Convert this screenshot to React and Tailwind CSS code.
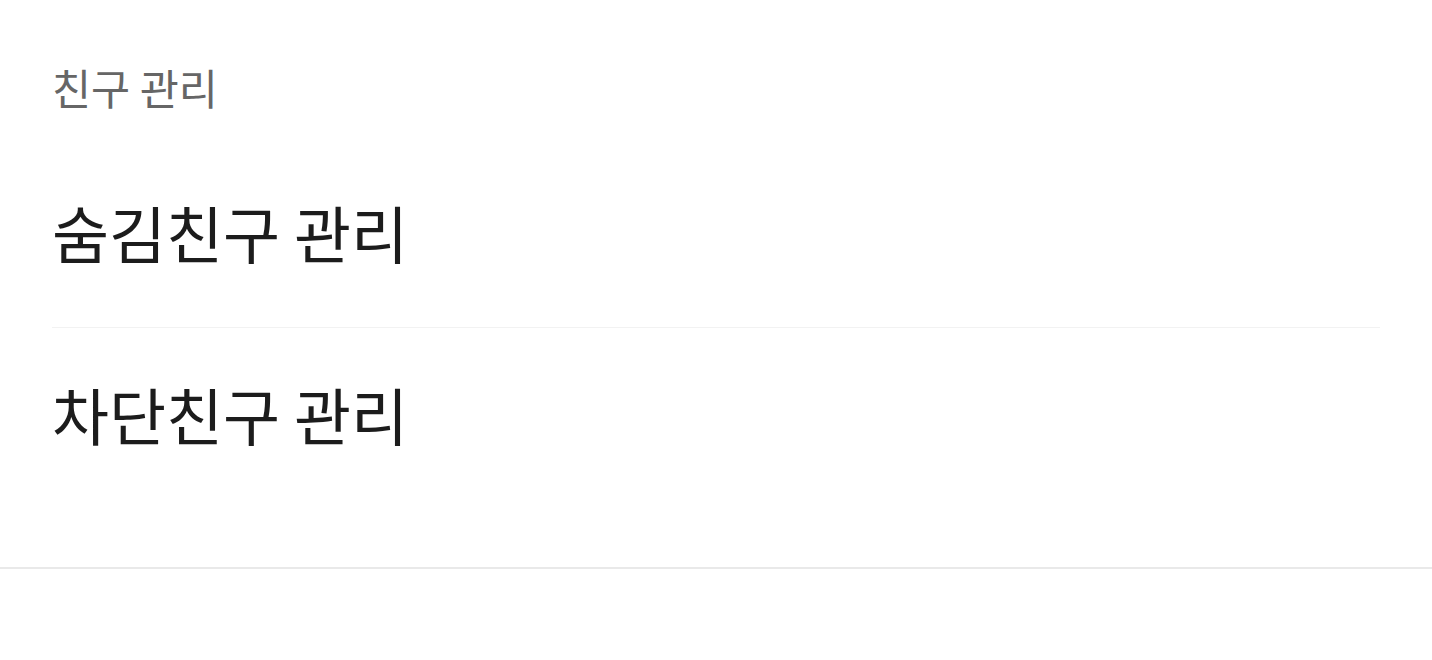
export default function App() {
  const font = { fontFamily: '"Noto Sans CJK KR", "Noto Sans", sans-serif' };
  return (
    <div className="w-[1432px] h-[660px] bg-white" style={font}>
      <section className="px-[52px] pt-[39px] pb-[61px] border-b-2 border-[#e9e9e9]">
        <div className="h-[100px] pb-[4px] flex items-center text-[42.5px] text-[#666666]">친구 관리</div>
        <div className="h-[189px] pb-[2px] flex items-center border-b border-[#f2f2f2] text-[62px] text-[#1c1c1c]">
          숨김친구 관리
        </div>
        <div className="h-[178px] pb-[6px] flex items-center text-[62px] text-[#1c1c1c]">차단친구 관리</div>
      </section>
    </div>
  );
}
